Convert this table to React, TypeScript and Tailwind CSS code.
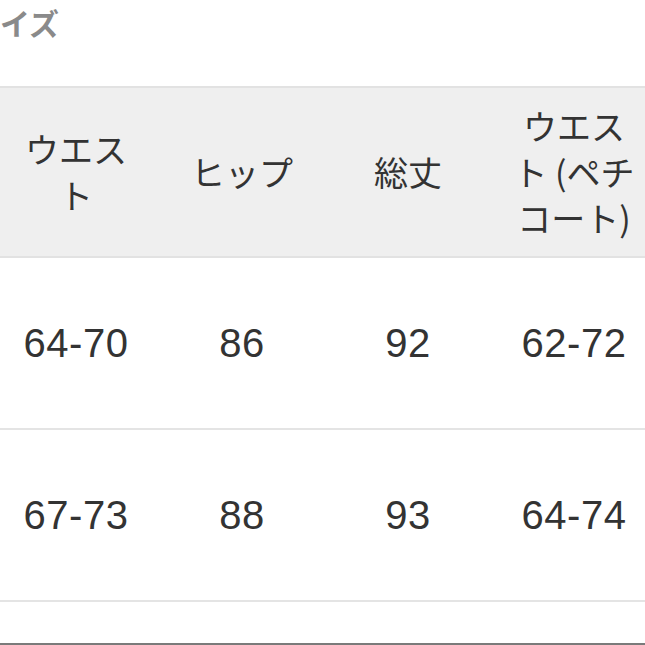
import React from "react";

const rows = [
  ["64-70", "86", "92", "62-72"],
  ["67-73", "88", "93", "64-74"],
];

const App: React.FC = () => {
  return (
    <div className="h-[645px] overflow-hidden bg-white border-b-2 border-[#7a7a7a] font-['Noto_Sans_CJK_JP',sans-serif]">
      {/* title (left part is off-screen in the screenshot) */}
      <div className="h-[86px] pt-[2px] text-[30px] leading-[40px] font-bold text-[#8a8a8a] whitespace-nowrap">
        イズ
      </div>

      {/* header */}
      <div className="ml-[-7px] w-[680px] grid grid-cols-[repeat(4,166px)] h-[172px] bg-[#efefef] border-y-2 border-[#e2e2e2] text-[34px] leading-[46px] text-[#333]">
        <div className="flex items-center justify-center text-center">
          ウエス
          <br />ト
        </div>
        <div className="flex items-center justify-center">ヒップ</div>
        <div className="flex items-center justify-center">総丈</div>
        <div className="flex items-center justify-center text-center">
          <div>
            ウエス
            <br />ト (ペチ
            <br />コート)
          </div>
        </div>
      </div>

      {/* body */}
      {rows.map((r, i) => (
        <div
          key={i}
          className="ml-[-7px] w-[680px] grid grid-cols-[repeat(4,166px)] h-[172px] border-b-2 border-[#e4e4e4] text-[40px] tracking-[0.5px] text-[#333] font-['Liberation_Sans',sans-serif]"
        >
          {r.map((v, j) => (
            <div key={j} className="flex items-center justify-center">
              {v}
            </div>
          ))}
        </div>
      ))}
    </div>
  );
};

export default App;
